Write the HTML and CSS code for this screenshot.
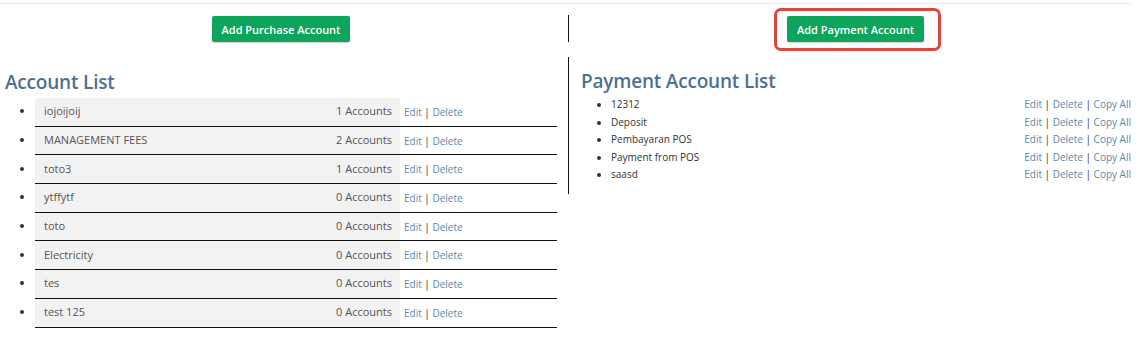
FILE: index.html
```html
<!DOCTYPE html>
<html>
  <head>
    <meta charset="utf-8" />
    <title>Accounts</title>
    <link rel="stylesheet" href="styles.css">
  </head>
  <body>
    <div class="page">
      <div class="columns toolbar">
        <div class="cell tool-left">
          <button class="btn">Add Purchase Account</button>
        </div>
        <div class="cell cell-right">
          <span class="highlight">
            <button class="btn">Add Payment Account</button>
          </span>
        </div>
      </div>

      <div class="columns lists">
        <div class="cell cell-left">
          <h2>Account List</h2>
          <ul class="account-list">
            <li><div class="row"><div class="name"><span>iojoijoij</span><span>1 Accounts</span></div><div class="actions"><a>Edit</a> | <a>Delete</a></div></div></li>
            <li><div class="row"><div class="name"><span>MANAGEMENT FEES</span><span>2 Accounts</span></div><div class="actions"><a>Edit</a> | <a>Delete</a></div></div></li>
            <li><div class="row"><div class="name"><span>toto3</span><span>1 Accounts</span></div><div class="actions"><a>Edit</a> | <a>Delete</a></div></div></li>
            <li><div class="row"><div class="name"><span>ytffytf</span><span>0 Accounts</span></div><div class="actions"><a>Edit</a> | <a>Delete</a></div></div></li>
            <li><div class="row"><div class="name"><span>toto</span><span>0 Accounts</span></div><div class="actions"><a>Edit</a> | <a>Delete</a></div></div></li>
            <li><div class="row"><div class="name"><span>Electricity</span><span>0 Accounts</span></div><div class="actions"><a>Edit</a> | <a>Delete</a></div></div></li>
            <li><div class="row"><div class="name"><span>tes</span><span>0 Accounts</span></div><div class="actions"><a>Edit</a> | <a>Delete</a></div></div></li>
            <li><div class="row"><div class="name"><span>test 125</span><span>0 Accounts</span></div><div class="actions"><a>Edit</a> | <a>Delete</a></div></div></li>
          </ul>
        </div>

        <div class="cell cell-right pay-cell">
          <h2>Payment Account List</h2>
          <ul class="payment-list">
            <li><div class="pay-row"><span>12312</span><span class="actions"><a>Edit</a> | <a>Delete</a> | <a>Copy All</a></span></div></li>
            <li><div class="pay-row"><span>Deposit</span><span class="actions"><a>Edit</a> | <a>Delete</a> | <a>Copy All</a></span></div></li>
            <li><div class="pay-row"><span>Pembayaran POS</span><span class="actions"><a>Edit</a> | <a>Delete</a> | <a>Copy All</a></span></div></li>
            <li><div class="pay-row"><span>Payment from POS</span><span class="actions"><a>Edit</a> | <a>Delete</a> | <a>Copy All</a></span></div></li>
            <li><div class="pay-row"><span>saasd</span><span class="actions"><a>Edit</a> | <a>Delete</a> | <a>Copy All</a></span></div></li>
          </ul>
        </div>
      </div>
    </div>
  </body>
</html>
```

FILE: styles.css
```css
/* Basics */
body,
html {
  margin: 0;
  padding: 0;
}
body {
  background: #fff;
  color: #333;
  font-family: "Open Sans", Arial, sans-serif;
}
* {
  box-sizing: border-box;
}

/* Layout */
.page {
  margin: 3px 9px 0 0;
  border-top: 1px solid #e8e8e8;
}
.columns {
  display: grid;
  grid-template-columns: 568px 1fr;
  margin-right: -9px;
}
.toolbar {
  margin-top: 11px;
}
.toolbar .cell {
  display: flex;
  justify-content: center;
  padding-top: 1px;
  height: 27px;
}
.toolbar .tool-left {
  padding-right: 6px;
}
.lists {
  margin-top: 15px;
  align-items: start;
}
.cell-right {
  border-left: 1px solid #111;
}
.cell-left {
  padding-left: 5px;
  padding-right: 11px;
}

/* Buttons */
.btn {
  height: 26px;
  padding: 0 10px;
  border: 0;
  border-radius: 2px;
  background: #0ca55b;
  color: #fff;
  font-family: inherit;
  font-size: 11px;
  font-weight: 600;
  box-shadow: 0 1px 1px rgba(0, 0, 0, 0.15);
}
.highlight {
  position: relative;
  display: inline-block;
  height: 26px;
  margin-left: 3px;
}
.highlight::after {
  content: "";
  position: absolute;
  top: -8px;
  bottom: -9px;
  left: -13px;
  right: -17px;
  border: 3px solid #d8483f;
  border-radius: 7px;
}

/* Headings */
h2 {
  margin: 0;
  font-size: 19px;
  line-height: 23px;
  font-weight: 600;
  letter-spacing: -0.2px;
  color: #4f7091;
}
.cell-left h2 {
  margin-top: 14px;
}
.pay-cell {
  padding: 13px 8px 10px 12px;
}

a {
  color: #5b88a8;
  cursor: pointer;
}

/* Account list */
.account-list {
  margin: 4px 0 0 0;
  padding-left: 30px;
  font-size: 11px;
}
.account-list li {
  border-bottom: 1px solid #111;
}
.row {
  display: flex;
  height: 27.7px;
  align-items: center;
}
.name {
  flex: 1;
  height: 100%;
  display: flex;
  align-items: center;
  justify-content: space-between;
  padding: 0 8px 2px 9px;
  background: #f2f2f2;
  color: #555;
}
.account-list .actions {
  width: 157px;
  padding: 0 0 0 4px;
  font-size: 10px;
}

/* Payment list */
.payment-list {
  margin: 3px 0 0 0;
  padding-left: 30px;
  font-size: 10px;
}
.payment-list li {
  line-height: 17.6px;
}
.pay-row {
  display: flex;
  justify-content: space-between;
}
```
